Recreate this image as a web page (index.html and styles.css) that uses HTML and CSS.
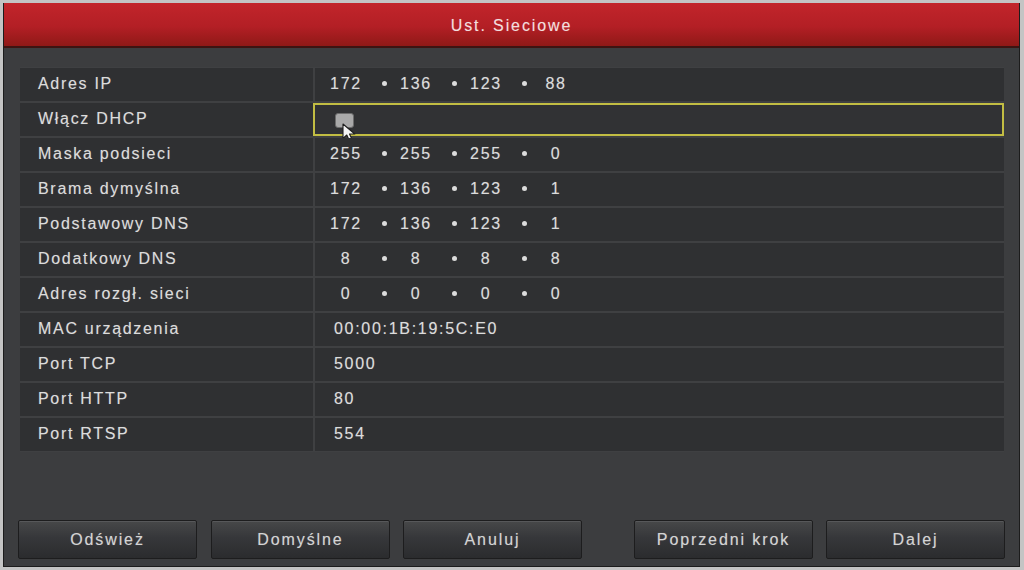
FILE: index.html
```html
<!DOCTYPE html>
<html lang="pl">
<head>
    <meta charset="UTF-8">
    <title>Ust. Sieciowe</title>
    <link rel="stylesheet" href="styles.css">
</head>
<body>
    <div class="window">
        <div class="title-bar">Ust. Sieciowe</div>

        <div class="settings">
            <div class="label">Adres IP</div>
            <div class="value ip">
                <span class="octet">172</span><span class="dot"></span>
                <span class="octet">136</span><span class="dot"></span>
                <span class="octet">123</span><span class="dot"></span>
                <span class="octet">88</span>
            </div>

            <div class="label">Włącz DHCP</div>
            <div class="value selected">
                <span class="checkbox"></span>
                <svg class="cursor" width="17" height="20" viewBox="0 0 17 20">
                    <path d="M1 1 L1 15.5 L4.8 12 L7.8 18.5 L10.4 17.3 L7.5 11 L12.8 11 Z" fill="#f4f4f4" stroke="#1e1e1e" stroke-width="1.1" stroke-linejoin="round"/>
                </svg>
            </div>

            <div class="label">Maska podsieci</div>
            <div class="value ip">
                <span class="octet">255</span><span class="dot"></span>
                <span class="octet">255</span><span class="dot"></span>
                <span class="octet">255</span><span class="dot"></span>
                <span class="octet">0</span>
            </div>

            <div class="label">Brama dymyślna</div>
            <div class="value ip">
                <span class="octet">172</span><span class="dot"></span>
                <span class="octet">136</span><span class="dot"></span>
                <span class="octet">123</span><span class="dot"></span>
                <span class="octet">1</span>
            </div>

            <div class="label">Podstawowy DNS</div>
            <div class="value ip">
                <span class="octet">172</span><span class="dot"></span>
                <span class="octet">136</span><span class="dot"></span>
                <span class="octet">123</span><span class="dot"></span>
                <span class="octet">1</span>
            </div>

            <div class="label">Dodatkowy DNS</div>
            <div class="value ip">
                <span class="octet">8</span><span class="dot"></span>
                <span class="octet">8</span><span class="dot"></span>
                <span class="octet">8</span><span class="dot"></span>
                <span class="octet">8</span>
            </div>

            <div class="label">Adres rozgł. sieci</div>
            <div class="value ip">
                <span class="octet">0</span><span class="dot"></span>
                <span class="octet">0</span><span class="dot"></span>
                <span class="octet">0</span><span class="dot"></span>
                <span class="octet">0</span>
            </div>

            <div class="label">MAC urządzenia</div>
            <div class="value text">00:00:1B:19:5C:E0</div>

            <div class="label">Port TCP</div>
            <div class="value text">5000</div>

            <div class="label">Port HTTP</div>
            <div class="value text">80</div>

            <div class="label">Port RTSP</div>
            <div class="value text">554</div>
        </div>

        <div class="buttons">
            <button>Odśwież</button>
            <button>Domyślne</button>
            <button>Anuluj</button>
            <div class="spacer"></div>
            <button>Poprzedni krok</button>
            <button>Dalej</button>
        </div>
    </div>
</body>
</html>
```

FILE: styles.css
```css
body {
    margin: 0;
    height: 570px;
    background-color: #c4c4c4;
    font-family: "Liberation Sans", Arial, sans-serif;
    overflow: hidden;
}

.window {
    margin: 3px 4px 0 3px;
    height: 564px;
    background-color: #3c3d3f;
    border: 1px solid #1c1c1c;
    border-top: none;
    box-sizing: border-box;
    display: flex;
    flex-direction: column;
}

.title-bar {
    height: 43px;
    line-height: 45px;
    text-align: center;
    color: #f2dede;
    font-size: 16px;
    letter-spacing: 1.9px;
    background: linear-gradient(#c2252b, #b31f25 55%, #8f1917);
    border-bottom: 2px solid #3d1412;
    text-shadow: 0 0 1px rgba(255, 230, 230, 0.35);
}

.settings {
    margin: 19px 15px 0 16px;
    display: grid;
    grid-template-columns: 293px 1fr;
    column-gap: 2px;
    row-gap: 2px;
    padding: 1px 0;
    background-color: #3f4042;
}

.label,
.value {
    height: 33px;
    display: flex;
    align-items: center;
    background-color: #2f3032;
    color: #dcdcdc;
    font-size: 16px;
    letter-spacing: 1.7px;
    padding-bottom: 2px;
    box-sizing: border-box;
    text-shadow: 0 0 1px rgba(255, 255, 255, 0.3);
}

.label {
    padding-left: 18px;
}

.value {
    position: relative;
}

.value.text {
    padding-left: 19px;
}

.value.ip {
    padding-left: 7px;
}

.octet {
    width: 48px;
    text-align: center;
}

.dot {
    width: 22px;
    display: flex;
    justify-content: center;
    padding-left: 6px;
    box-sizing: border-box;
}

.dot::before {
    content: "";
    width: 5px;
    height: 5px;
    border-radius: 50%;
    background-color: #dcdcdc;
}

.value.selected {
    margin-left: -2px;
    border: 2px solid #c2bd43;
    background-color: #313234;
    padding: 0 0 0 20px;
}

.checkbox {
    width: 19px;
    height: 15px;
    border-radius: 3px;
    background-color: #a9a9a9;
    border: 1px solid #6c6c6c;
    box-sizing: border-box;
    margin-top: 2px;
}

.cursor {
    position: absolute;
    left: 27px;
    top: 18px;
}

.buttons {
    margin: auto 0 7px 14px;
    display: flex;
    gap: 13px;
}

.buttons button:nth-child(2) {
    margin-left: 1px;
}

.spacer {
    width: 26px;
}

button {
    flex: none;
    width: 179px;
    height: 39px;
    background: linear-gradient(#474849, #36373a 45%, #2b2c2e);
    border: 1px solid #1d1d1e;
    border-radius: 2px;
    box-shadow: inset 0 1px 0 #57585a;
    color: #d4d4d4;
    font-family: "Liberation Sans", Arial, sans-serif;
    font-size: 16px;
    letter-spacing: 1.9px;
    padding: 0;
    text-shadow: 0 0 1px rgba(255, 255, 255, 0.3);
}
```
